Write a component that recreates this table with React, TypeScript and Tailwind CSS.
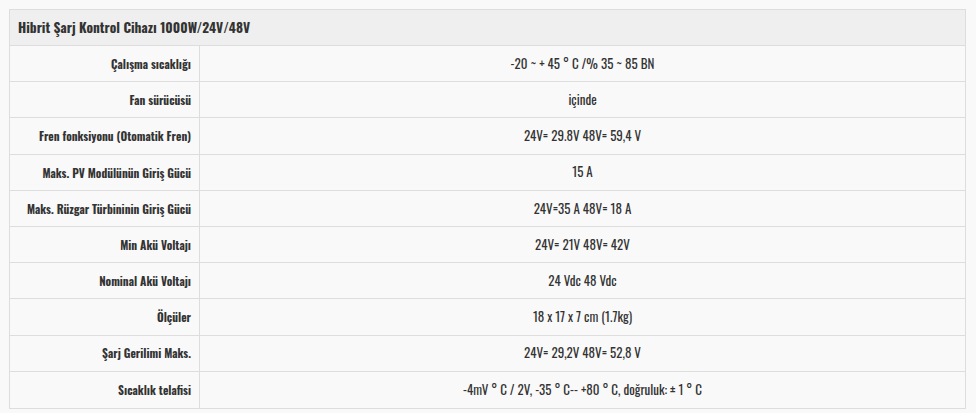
const rows: [string, string][] = [
  ["Çalışma sıcaklığı", "-20 ~ + 45 ° C /% 35 ~ 85 BN"],
  ["Fan sürücüsü", "içinde"],
  ["Fren fonksiyonu (Otomatik Fren)", "24V= 29.8V 48V= 59,4 V"],
  ["Maks. PV Modülünün Giriş Gücü", "15 A"],
  ["Maks. Rüzgar Türbininin Giriş Gücü", "24V=35 A 48V= 18 A"],
  ["Min Akü Voltajı", "24V= 21V 48V= 42V"],
  ["Nominal Akü Voltajı", "24 Vdc 48 Vdc"],
  ["Ölçüler", "18 x 17 x 7 cm (1.7kg)"],
  ["Şarj Gerilimi Maks.", "24V= 29,2V 48V= 52,8 V"],
  ["Sıcaklık telafisi", "-4mV ° C / 2V, -35 ° C-- +80 ° C, doğruluk: ± 1 ° C"],
];

export default function App() {
  return (
    <div className="min-h-screen bg-[#f9f9f9] pt-[9px] pl-[9px] pr-[10px] font-['Oswald',sans-serif] text-[#333]">
      <div className="border border-[#dddddd]">
        {/* Header */}
        <div className="h-[36px] bg-[#efefef] border-b border-[#dddddd] flex items-center px-2 text-[13.5px] font-bold">
          Hibrit Şarj Kontrol Cihazı 1000W/24V/48V
        </div>

        {/* Rows */}
        {rows.map(([label, value], i) => (
          <div
            key={label}
            className={`grid grid-cols-[190px_1fr] h-[36.2px] ${i < rows.length - 1 ? "border-b border-[#dddddd]" : ""}`}
          >
            <div className="border-r border-[#dddddd] flex items-center justify-end pr-2 text-[11.5px] font-bold">
              {label}
            </div>
            <div className="flex items-center justify-center text-[13px] font-normal">{value}</div>
          </div>
        ))}
      </div>
    </div>
  );
}
